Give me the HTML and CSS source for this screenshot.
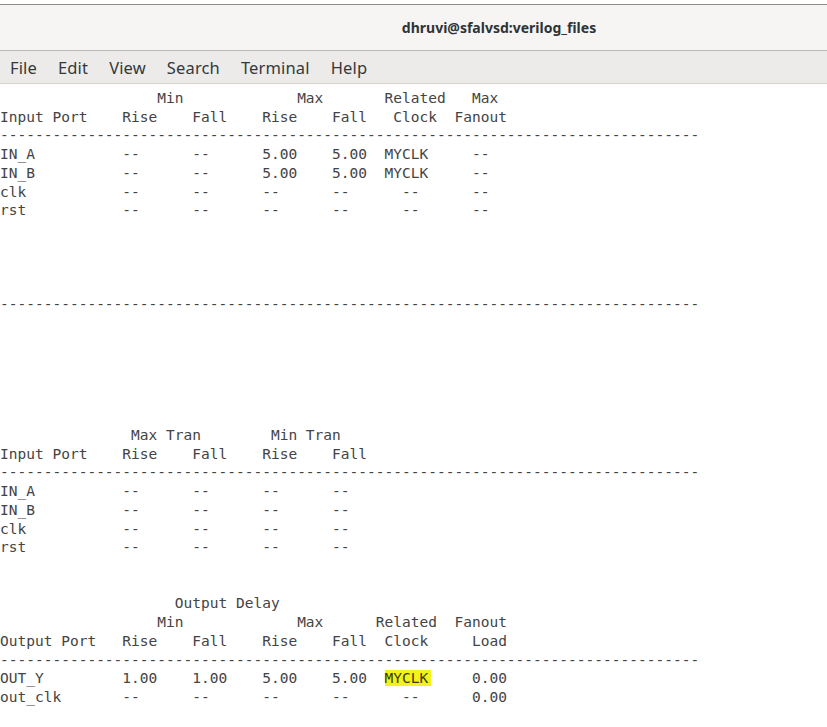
FILE: index.html
```
<!DOCTYPE html>
<html>
<head>
<meta charset="utf-8">
<link rel="stylesheet" href="styles.css">
</head>
<body>
<div class="window">
  <div class="titlebar"><span class="title">dhruvi@sfalvsd:verilog_files</span></div>
  <div class="menubar">
    <span class="menu-item">File</span>
    <span class="menu-item">Edit</span>
    <span class="menu-item">View</span>
    <span class="menu-item">Search</span>
    <span class="menu-item">Terminal</span>
    <span class="menu-item">Help</span>
  </div>
  <pre class="terminal">                  Min             Max       Related   Max
Input Port    Rise    Fall    Rise    Fall   Clock  Fanout
--------------------------------------------------------------------------------
IN_A          --      --      5.00    5.00  MYCLK     --
IN_B          --      --      5.00    5.00  MYCLK     --
clk           --      --      --      --      --      --
rst           --      --      --      --      --      --




--------------------------------------------------------------------------------






               Max Tran        Min Tran
Input Port    Rise    Fall    Rise    Fall
--------------------------------------------------------------------------------
IN_A          --      --      --      --
IN_B          --      --      --      --
clk           --      --      --      --
rst           --      --      --      --


                    Output Delay
                  Min             Max      Related  Fanout
Output Port   Rise    Fall    Rise    Fall  Clock     Load
--------------------------------------------------------------------------------
OUT_Y         1.00    1.00    5.00    5.00  <span class="hl">MYCLK</span>     0.00
out_clk       --      --      --      --      --      0.00</pre>
</div>
</body>
</html>
```
FILE: styles.css
```
html, body {
  margin: 0;
  padding: 0;
  background: #ffffff;
  overflow: hidden;
}

.window {
  margin-top: 4px;
  border-top: 1px solid #8e8c8a;
  background: #ffffff;
}

.titlebar {
  height: 45px;
  background: #f6f5f4;
  border-bottom: 1px solid #bdb8b3;
  display: flex;
  align-items: center;
  justify-content: center;
  padding-left: 171px;
}

.title {
  font-family: "Noto Sans", sans-serif;
  font-weight: 700;
  font-size: 14px;
  color: #2e3436;
}

.menubar {
  height: 32px;
  background: #edebe9;
  border-bottom: 1px solid #d6d2ce;
  display: flex;
  align-items: center;
  padding-left: 10px;
  gap: 21px;
}

.menu-item {
  font-family: "Noto Sans", sans-serif;
  font-size: 16.5px;
  letter-spacing: 0.15px;
  color: #33393b;
}

.terminal {
  margin: 0;
  padding: 5px 0 0 0;
  font-family: "DejaVu Sans Mono", monospace;
  font-size: 14.53px;
  line-height: 18.72px;
  color: #444444;
  background: #ffffff;
}

.hl {
  background: #f3f31b;
  color: #3a3a00;
  padding: 0 3px 0 0;
  margin: 0 -3px 0 0;
}
```
